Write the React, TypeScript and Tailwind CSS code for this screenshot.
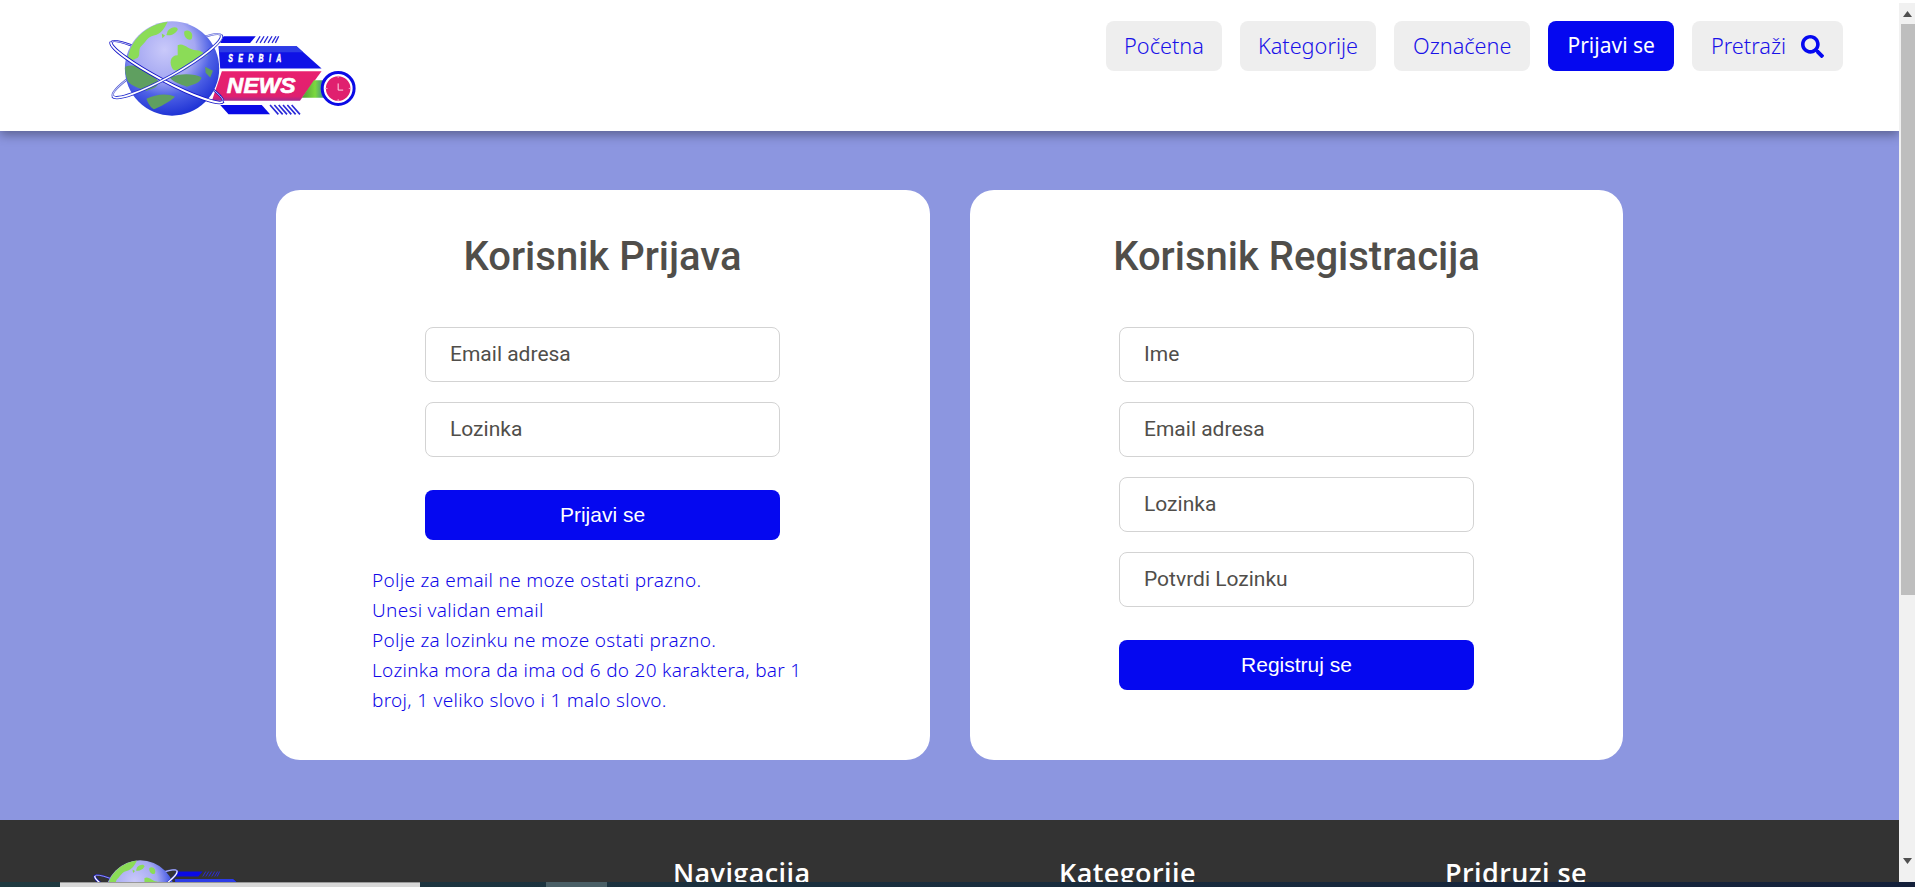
import React from "react";
import { FaSearch } from "react-icons/fa";

function Logo({ className, id }: { className: string; id: string }) {
  return (
    <svg viewBox="50 50 760 310" className={className} aria-label="Serbia News logo">
      <defs>
        <radialGradient id={`${id}-globe`} cx="42%" cy="30%" r="72%">
          <stop offset="0%" stopColor="#c9c9fa" />
          <stop offset="45%" stopColor="#a5a8f2" />
          <stop offset="68%" stopColor="#4f62e6" />
          <stop offset="100%" stopColor="#1c30d4" />
        </radialGradient>
        <linearGradient id={`${id}-green`} x1="0" y1="0" x2="1" y2="0">
          <stop offset="0%" stopColor="#4f9a3a" />
          <stop offset="60%" stopColor="#7bd93f" />
          <stop offset="100%" stopColor="#3f8f8a" />
        </linearGradient>
        <linearGradient id={`${id}-pink`} x1="0" y1="0" x2="0" y2="1">
          <stop offset="0%" stopColor="#e8206f" />
          <stop offset="85%" stopColor="#e0206f" />
          <stop offset="100%" stopColor="#a02a90" />
        </linearGradient>
      </defs>
      <polygon points="400,108 497,108 480,128 390,128" fill="#0a0ae6" />
      <g stroke="#2a2ad8" strokeWidth="4">
        <path d="M510,108 L498,128 M522,108 L510,128 M534,108 L522,128 M546,108 L534,128 M558,108 L546,128 M566,108 L556,128" />
      </g>
      <polygon points="385,138 620,138 695,205 390,205" fill="#0f12e6" />
      <polygon points="385,138 620,138 640,156 388,156" fill="#2c3ce6" />
      <polygon points="395,213 695,213 630,302 365,302" fill={`url(#${id}-pink)`} />
      <polygon points="672,240 702,240 702,293 636,293" fill={`url(#${id}-green)`} />
      <polygon points="390,315 515,315 540,343 415,343" fill="#0a0ae6" />
      <g stroke="#2a2ad8" strokeWidth="5">
        <path d="M540,315 L565,343 M553,315 L578,343 M566,315 L591,343 M579,315 L604,343 M592,315 L617,343 M605,315 L630,343" />
      </g>
      <text transform="translate(414,186) scale(0.62,1)" fill="#fff" stroke="#fff" strokeWidth="1.5" fontFamily="Liberation Sans, sans-serif" fontWeight="700" fontStyle="italic" fontSize="34" letterSpacing="26">SERBIA</text>
      <text x="410" y="278" fill="#fff" stroke="#fff" strokeWidth="2" fontFamily="Liberation Sans, sans-serif" fontWeight="700" fontStyle="italic" fontSize="69">NEWS</text>
      <circle cx="745" cy="265" r="42" fill="#e0206f" stroke="#fff" strokeWidth="10" />
      <circle cx="745" cy="265" r="48" fill="none" stroke="#0a0ae6" strokeWidth="9" />
      <path d="M745,250 V270 H760" fill="none" stroke="#ffd9e8" strokeWidth="3" />
      <path d="M745,226 V233 M745,297 V304 M706,265 H713 M777,265 H784" stroke="#f6a8c8" strokeWidth="3" />
      <g fill="none" transform="rotate(27.9 230 215)">
        <ellipse cx="230" cy="215" rx="190" ry="28" stroke="#1313c8" strokeWidth="7" />
        <ellipse cx="230" cy="215" rx="190" ry="28" stroke="#fff" strokeWidth="2" />
      </g>
      <g fill="none" transform="rotate(-29.3 230 197)">
        <ellipse cx="230" cy="197" rx="187" ry="32" stroke="#5a63d8" strokeWidth="7" />
        <ellipse cx="230" cy="197" rx="187" ry="32" stroke="#fff" strokeWidth="2" />
      </g>
      <circle cx="245" cy="205" r="142" fill={`url(#${id}-globe)`} />
      <g fill="#8bdc57">
        <path d="M112,178 C116,125 165,72 232,64 C222,82 215,100 190,106 C170,110 165,128 152,138 C140,150 155,170 135,176 C124,180 118,186 112,178 Z" />
        <path d="M232,92 C240,80 262,76 262,88 C256,100 240,108 228,104 Z" />
        <path d="M282,94 C295,84 312,100 304,116 C295,124 278,110 282,94 Z" />
        <path d="M262,135 C280,125 295,150 318,150 C330,148 340,160 352,165 C335,172 322,172 302,195 C285,215 262,215 248,208 C236,190 238,165 262,165 Z" />
        <path d="M214,100 L224,106 L216,114 Z" />
      </g>
      <g fill="#5f9f60">
        <path d="M104,200 C135,188 165,205 202,240 C208,262 188,264 168,272 C150,266 125,258 112,244 C106,228 103,215 104,200 Z" />
        <path d="M238,232 C270,218 312,220 334,232 C328,252 305,252 290,260 C270,252 250,247 238,232 Z" />
        <path d="M168,296 C195,282 230,278 254,290 C238,306 205,322 190,328 C178,320 172,308 168,296 Z" />
        <path d="M345,200 L368,212 L360,232 L346,218 Z" />
      </g>
      <g fill="none" transform="rotate(27.9 230 215)">
        <path d="M40,215 A190,28 0 0 0 420,215" stroke="#1313c8" strokeWidth="11" />
        <path d="M40,215 A190,28 0 0 0 420,215" stroke="#fff" strokeWidth="6" />
      </g>
      <g fill="none" transform="rotate(-29.3 230 197)">
        <path d="M43,197 A187,32 0 0 0 417,197" stroke="#2a33d0" strokeWidth="10" />
        <path d="M43,197 A187,32 0 0 0 417,197" stroke="#fff" strokeWidth="5" />
      </g>
    </svg>
  );
}

const navItem = "flex h-[50px] items-center rounded-lg font-['Noto_Sans','Open_Sans',sans-serif]";

function Input({ label }: { label: string }) {
  return (
    <div className="flex h-[55px] w-[355px] items-center rounded-lg border border-[#d3d3d3] pt-[1px] pl-6 font-['Roboto',sans-serif] text-[21px] text-[#504e4a]">
      {label}
    </div>
  );
}

function SubmitButton({ label }: { label: string }) {
  return (
    <button className="mt-[33px] flex h-[50px] w-[355px] items-center justify-center rounded-lg bg-[#0508f0] pb-[1px] font-['Liberation_Sans',sans-serif] text-[21px] text-white">
      {label}
    </button>
  );
}

export default function App() {
  return (
    <div className="flex h-[887px] w-full flex-col overflow-hidden">
      <div className="flex min-h-0 flex-1">
        <div className="flex min-w-0 flex-1 flex-col overflow-hidden bg-[#8c96e0]">
          <header className="relative z-10 flex h-[131px] shrink-0 items-start justify-between bg-white pl-[107px] pr-[56px] shadow-[0_4px_10px_rgba(0,0,0,0.35)]">
            <Logo id="top" className="mt-[17px] h-[103px] w-[253px]" />
            <nav className="mt-[21px] flex gap-[18px] text-[21.7px] font-light text-[#1a12e8]">
              <a className={`${navItem} bg-[#eeeeee] px-[18px]`}>Početna</a>
              <a className={`${navItem} bg-[#eeeeee] px-[18px]`}>Kategorije</a>
              <a className={`${navItem} bg-[#eeeeee] px-[19px]`}>Označene</a>
              <a className={`${navItem} bg-[#0508f0] px-[19px] text-[21px] font-normal text-white`}>Prijavi se</a>
              <a className={`${navItem} gap-[15px] bg-[#eeeeee] px-[19px]`}>
                Pretraži
                <FaSearch className="text-[23px] text-[#0508f0]" />
              </a>
            </nav>
          </header>
          <main className="flex h-[689px] shrink-0 justify-center gap-10 pt-[59px]">
            <section className="flex h-[570px] w-[654px] flex-col items-center rounded-[24px] bg-white pr-[1px]">
              <h1 className="mt-[43px] mb-[47px] font-['Roboto',sans-serif] text-[40px] leading-[47px] font-medium text-[#504e4a]">Korisnik Prijava</h1>
              <div className="flex flex-col gap-5">
                <Input label="Email adresa" />
                <Input label="Lozinka" />
              </div>
              <SubmitButton label="Prijavi se" />
              <div className="mt-[25px] ml-[96px] w-[440px] self-start font-['Noto_Sans',sans-serif] text-[19px] leading-[30px] font-light tracking-[0.3px] text-[#1008e8]">
                <p>Polje za email ne moze ostati prazno.</p>
                <p>Unesi validan email</p>
                <p>Polje za lozinku ne moze ostati prazno.</p>
                <p>Lozinka mora da ima od 6 do 20 karaktera, bar 1 broj, 1 veliko slovo i 1 malo slovo.</p>
              </div>
            </section>
            <section className="flex h-[570px] w-[653px] flex-col items-center rounded-[24px] bg-white">
              <h1 className="mt-[43px] mb-[47px] font-['Roboto',sans-serif] text-[40px] leading-[47px] font-medium text-[#504e4a]">Korisnik Registracija</h1>
              <div className="flex flex-col gap-5">
                <Input label="Ime" />
                <Input label="Email adresa" />
                <Input label="Lozinka" />
                <Input label="Potvrdi Lozinku" />
              </div>
              <SubmitButton label="Registruj se" />
            </section>
          </main>
          <footer className="flex flex-1 bg-[#333333] text-white">
            <Logo id="foot" className="mt-[37px] ml-[92px] h-[77px] w-[188px] shrink-0" />
            <div className="ml-[393px] flex pt-[36px] font-['Open_Sans',sans-serif] text-[27px] leading-[34px] font-semibold tracking-[0.4px]">
              <h2 className="w-[386px]">Navigacija</h2>
              <h2 className="w-[386px]">Kategorije</h2>
              <h2>Pridruzi se</h2>
            </div>
          </footer>
        </div>
        <div className="flex w-[16px] shrink-0 flex-col bg-[#f1f1f1]">
          <div className="h-[3px] bg-white" />
          <div className="flex h-[21px] items-center justify-center pl-[1px] text-[#505050]">
            <svg width="9" height="6" viewBox="0 0 9 6"><path d="M4.5 0 9 6H0z" fill="currentColor" /></svg>
          </div>
          <div className="ml-[2px] h-[571px] bg-[#bebebe]" />
          <div className="flex flex-1 items-end justify-center pb-[18px] pl-[1px] text-[#505050]">
            <svg width="9" height="6" viewBox="0 0 9 6"><path d="M4.5 6 9 0H0z" fill="currentColor" /></svg>
          </div>
        </div>
      </div>
      <div className="flex h-[5px] shrink-0 bg-gradient-to-r from-[#1f3a40] to-[#14203a]">
        <div className="ml-[60px] w-[360px] border-t border-[#999999] bg-[#d8d8d8]" />
        <div className="ml-[126px] w-[61px] bg-[#4a5f66]" />
      </div>
    </div>
  );
}
